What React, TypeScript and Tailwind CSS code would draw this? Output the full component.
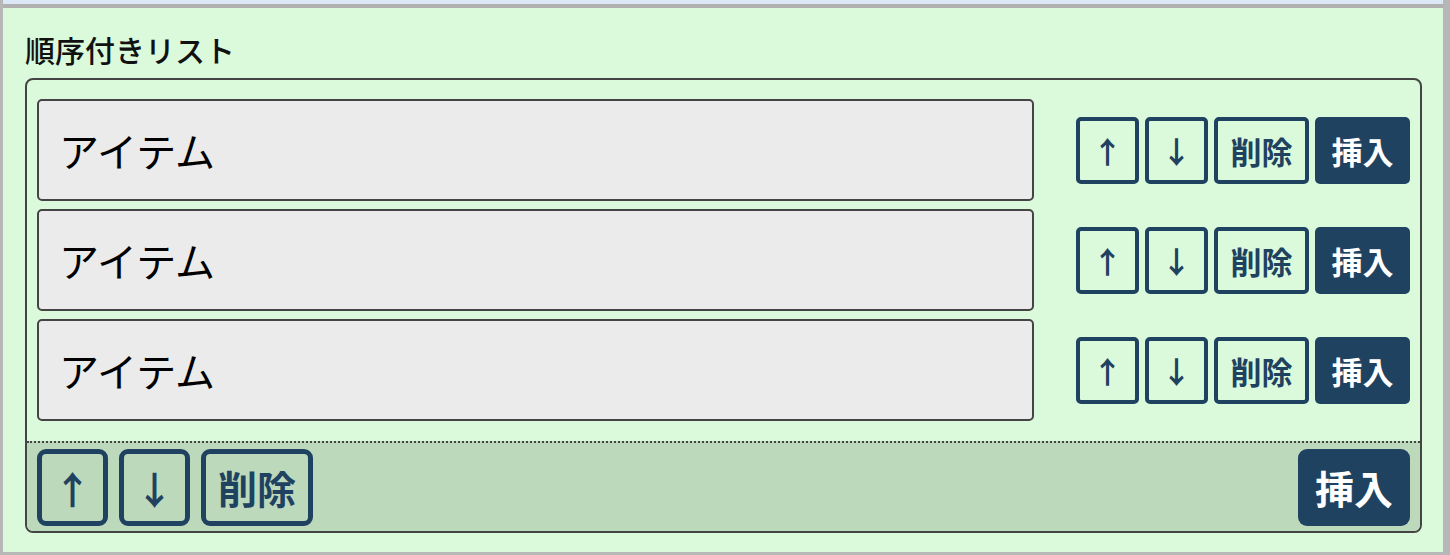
import React from 'react';

const jp = '[font-family:"Noto_Sans_CJK_JP","Noto_Sans",sans-serif]';

const RowButtons: React.FC = () => {
  return (
    <div className="flex items-center gap-[6px] ml-[42px]">
      <button className="w-[63px] h-[67px] border-[4px] border-[#1f4260] rounded-[5px] text-[#1f4260] text-[30px] font-bold leading-none flex items-center justify-center">
        ↑
      </button>
      <button className="w-[63px] h-[67px] border-[4px] border-[#1f4260] rounded-[5px] text-[#1f4260] text-[30px] font-bold leading-none flex items-center justify-center">
        ↓
      </button>
      <button className="w-[95px] h-[67px] border-[4px] border-[#1f4260] rounded-[5px] text-[#1f4260] text-[31px] font-bold leading-none flex items-center justify-center">
        削除
      </button>
      <button className="w-[95px] h-[67px] bg-[#1f4260] rounded-[5px] text-white text-[31px] font-bold leading-none flex items-center justify-center">
        挿入
      </button>
    </div>
  );
};

const Item: React.FC = () => {
  return (
    <div className="flex items-center">
      <div className="flex-1 h-[102px] bg-[#ebebeb] border-2 border-[#444] rounded-[5px] flex items-center pl-[20px] text-[40px] text-black">
        アイテム
      </div>
      <RowButtons />
    </div>
  );
};

export default function App() {
  return (
    <div className={`w-full h-[555px] bg-[#b7b7b7] pl-[3px] pr-[7px] pb-[3px] flex flex-col ${jp}`}>
      <div className="h-[4px] bg-[#dce8f6] shrink-0" />
      <div className="flex-1 border-t-[4px] border-[#b0b0b0] bg-[#dbf9db] pl-[22px] pr-[21px] flex flex-col">
        <div className="h-[70px] flex items-center pt-[12px] text-[30px] font-medium text-[#111] leading-none">順序付きリスト</div>
        <div className="border-2 border-[#444] rounded-[8px] overflow-hidden flex flex-col">
          <div className="flex flex-col gap-[8px] pt-[19px] pb-[20px] pl-[10px] pr-[10px]">
            <Item />
            <Item />
            <Item />
          </div>
          <div className="border-t-2 border-dotted border-[#444] bg-[#bcd9bc] flex items-center justify-between pl-[10px] pr-[10px] pt-[6px] pb-[5px]">
            <div className="flex items-center gap-[11px]">
              <button className="w-[71px] h-[77px] border-[5px] border-[#1f4260] rounded-[9px] text-[#1f4260] text-[38px] font-bold leading-none flex items-center justify-center">
                ↑
              </button>
              <button className="w-[71px] h-[77px] border-[5px] border-[#1f4260] rounded-[9px] text-[#1f4260] text-[38px] font-bold leading-none flex items-center justify-center">
                ↓
              </button>
              <button className="w-[112px] h-[77px] border-[5px] border-[#1f4260] rounded-[9px] text-[#1f4260] text-[39px] font-bold leading-none flex items-center justify-center">
                削除
              </button>
            </div>
            <button className="w-[112px] h-[77px] bg-[#1f4260] rounded-[9px] text-white text-[39px] font-bold leading-none flex items-center justify-center">
              挿入
            </button>
          </div>
        </div>
      </div>
    </div>
  );
}
